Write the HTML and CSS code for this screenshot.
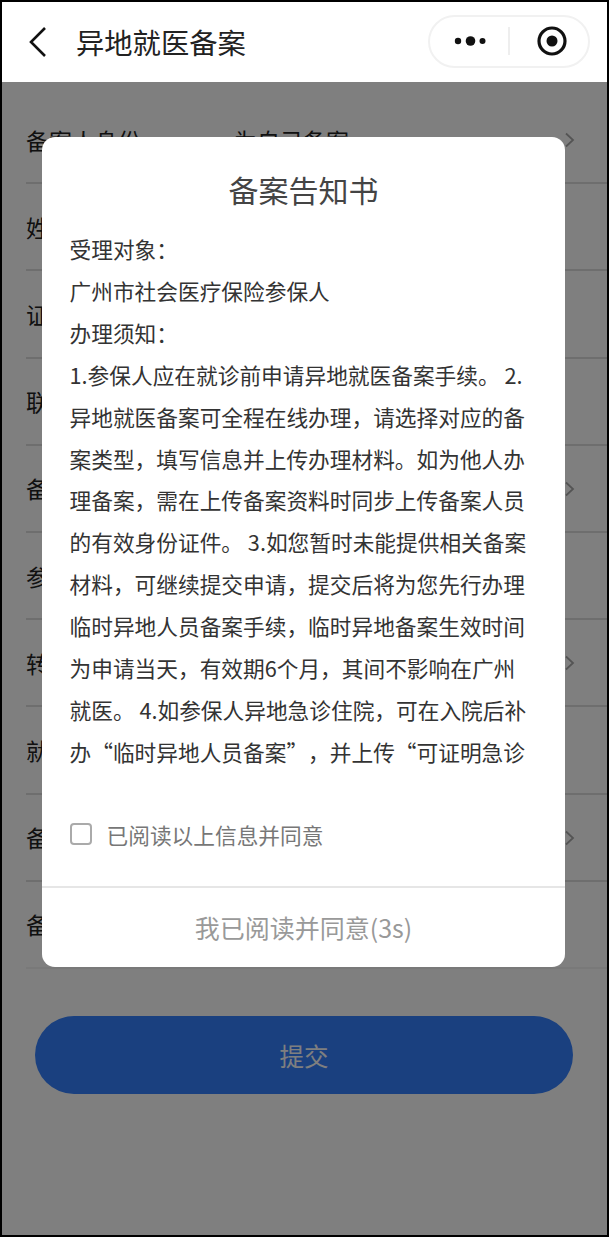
FILE: index.html
```html
<!DOCTYPE html>
<html lang="zh-CN">
<head>
<meta charset="utf-8">
<title>异地就医备案</title>
<link rel="stylesheet" href="styles.css">
</head>
<body>
<div class="app">
  <header class="nav">
    <svg class="back" width="20" height="32" viewBox="0 0 20 32"><path d="M17 2 L3 16 L17 30" fill="none" stroke="#111" stroke-width="2.6"/></svg>
    <h1 class="nav-title">异地就医备案</h1>
    <div class="capsule">
      <svg width="32" height="12" viewBox="0 0 32 12"><circle cx="4" cy="6" r="3.2" fill="#111"/><circle cx="16.5" cy="6" r="4.8" fill="#111"/><circle cx="28.5" cy="6" r="3" fill="#111"/></svg>
      <span class="capsule-line"></span>
      <svg width="32" height="32" viewBox="0 0 32 32"><circle cx="16" cy="16" r="13" fill="none" stroke="#111" stroke-width="3.2"/><circle cx="16" cy="16" r="5.5" fill="#111"/></svg>
    </div>
  </header>
  <main class="content">
    <div class="list">
      <div class="row"><span class="label">备案人身份</span><span class="value">为自己备案</span><svg class="chev" width="11" height="16" viewBox="0 0 11 16"><path d="M2 1.5 L9 8 L2 14.5" fill="none" stroke="#a8a8a8" stroke-width="1.8"/></svg></div>
      <div class="row"><span class="label">姓名</span></div>
      <div class="row"><span class="label">证件号码</span></div>
      <div class="row"><span class="label">联系电话</span></div>
      <div class="row"><span class="label">备案类型</span><svg class="chev" width="11" height="16" viewBox="0 0 11 16"><path d="M2 1.5 L9 8 L2 14.5" fill="none" stroke="#a8a8a8" stroke-width="1.8"/></svg></div>
      <div class="row"><span class="label">参保地</span></div>
      <div class="row"><span class="label">转入地</span><svg class="chev" width="11" height="16" viewBox="0 0 11 16"><path d="M2 1.5 L9 8 L2 14.5" fill="none" stroke="#a8a8a8" stroke-width="1.8"/></svg></div>
      <div class="row"><span class="label">就医地</span></div>
      <div class="row"><span class="label">备案开始时间</span><svg class="chev" width="11" height="16" viewBox="0 0 11 16"><path d="M2 1.5 L9 8 L2 14.5" fill="none" stroke="#a8a8a8" stroke-width="1.8"/></svg></div>
      <div class="row"><span class="label">备注</span></div>
    </div>
    <div class="submit-wrap"><button class="submit">提交</button></div>
    <div class="overlay">
      <section class="modal">
        <h2 class="modal-title">备案告知书</h2>
        <div class="modal-body">
          <p>受理对象：</p>
          <p>广州市社会医疗保险参保人</p>
          <p>办理须知：</p>
          <p>1.参保人应在就诊前申请异地就医备案手续。 2.<br>异地就医备案可全程在线办理，请选择对应的备<br>案类型，填写信息并上传办理材料。如为他人办<br>理备案，需在上传备案资料时同步上传备案人员<br>的有效身份证件。 3.如您暂时未能提供相关备案<br>材料，可继续提交申请，提交后将为您先行办理<br>临时异地人员备案手续，临时异地备案生效时间<br>为申请当天，有效期6个月，其间不影响在广州<br>就医。 4.如参保人异地急诊住院，可在入院后补<br>办“临时异地人员备案”，并上传“可证明急诊</p>
        </div>
        <label class="agree"><span class="box"></span><span>已阅读以上信息并同意</span></label>
        <div class="modal-foot">我已阅读并同意(3s)</div>
      </section>
    </div>
  </main>
</div>
</body>
</html>
```
FILE: styles.css
```css
* { box-sizing: border-box; }
html, body { margin: 0; padding: 0; height: 100%; background: #000; overflow: hidden; }
body { font-family: "Noto Sans CJK SC", "Noto Sans", sans-serif; padding: 2px; text-spacing-trim: space-all; }
.app { width: 605px; height: 1233px; background: #fff; display: flex; flex-direction: column; overflow: hidden; }

.nav { height: 80px; flex: none; display: flex; align-items: center; background: #fff; padding-left: 26px; position: relative; }
.back { flex: none; }
.nav-title { margin: 0 0 0 28px; font-size: 28.3px; font-weight: 400; color: #222; line-height: 40px; }
.capsule { margin-left: auto; margin-right: 17px; width: 162px; height: 53px; margin-top: -2px; border: 2px solid #f1f1f1; border-radius: 27px; display: flex; align-items: center; padding-left: 24px; }
.capsule-line { width: 2px; height: 28px; background: #eee; margin: 0 26px 0 22px; }

.content { position: relative; flex: 1; background: #fff; }
.list { padding: 15px 0 0 24px; }
.row { height: 87.2px; display: flex; align-items: center; border-bottom: 2px solid #ddd; font-size: 23px; color: #222; position: relative; }
.row:last-child { border-bottom-color: #f3f3f3; }
.label { width: 208px; flex: none; }
.value { flex: none; }
.chev { position: absolute; left: 538px; top: 35px; }

.submit-wrap { padding: 47px 34px 0 33px; }
.submit { display: block; width: 100%; height: 78px; padding: 2px 0 0; border: 0; border-radius: 39px; background: #3480fe; color: #fff; font: inherit; font-size: 24.5px; }

.overlay { position: absolute; inset: 0; background: rgba(0, 0, 0, 0.5); padding: 55px 0 0 40px; }
.modal { width: 523px; height: 830px; background: #fff; border-radius: 13px; display: flex; flex-direction: column; overflow: hidden; }
.modal-title { margin: 0; flex: none; padding: 31px 0 18px; font-size: 30px; line-height: 42px; font-weight: 400; text-align: center; color: #444; }
.modal-body { flex: none; height: 545px; padding: 0 10px 0 27.5px; font-size: 21.7px; line-height: 41.9px; color: #333; overflow: hidden; }
.modal-body p { margin: 0; }
.agree { flex: none; height: 113px; padding: 9px 0 0 28px; display: flex; align-items: center; font-size: 21.7px; color: #777; }
.box { width: 22px; height: 22px; border: 2px solid #aaa; border-radius: 4px; margin-right: 15px; margin-left: -0.5px; flex: none; }
.modal-foot { flex: 1; border-top: 2px solid #e6e6e6; display: flex; align-items: center; justify-content: center; font-size: 25px; color: #999; padding-bottom: 2px; }
```
